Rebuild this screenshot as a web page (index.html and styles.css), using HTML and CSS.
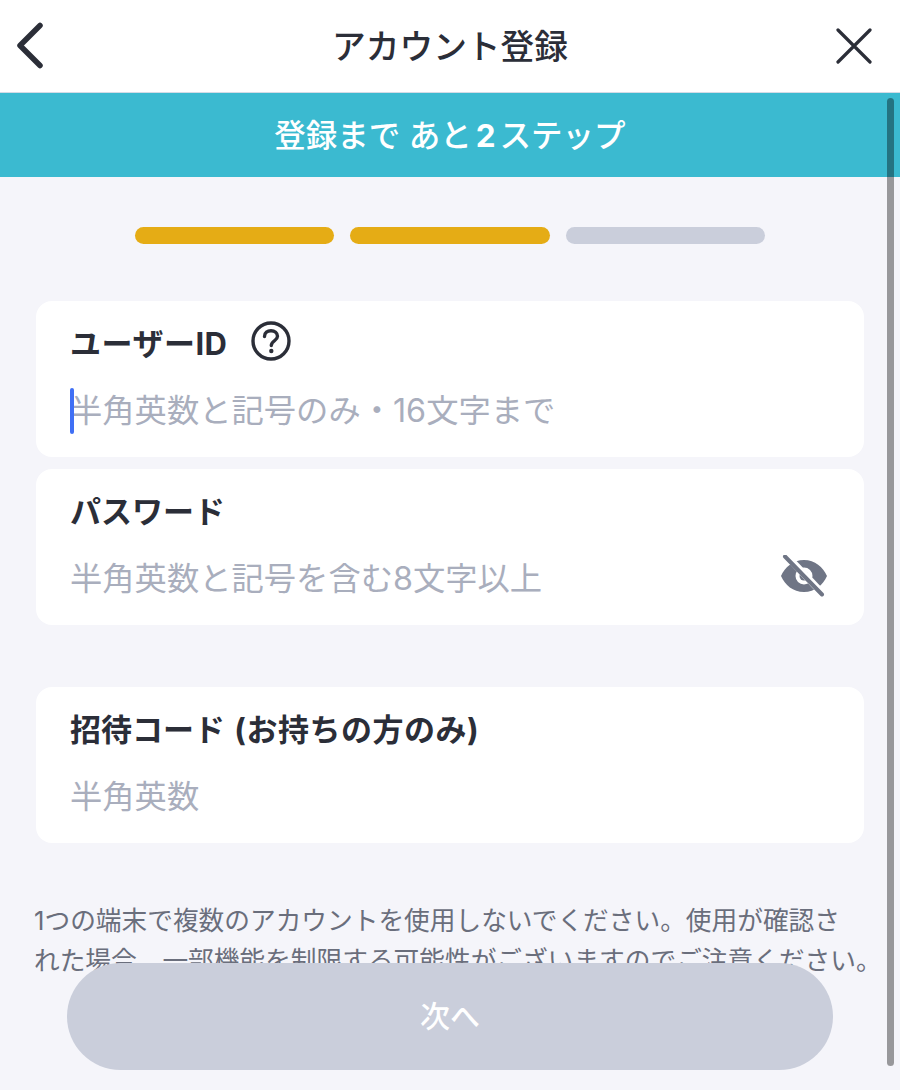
FILE: index.html
```html
<!DOCTYPE html>
<html lang="ja">
<head>
    <meta charset="UTF-8">
    <meta name="viewport" content="width=device-width, initial-scale=1.0">
    <title>アカウント登録</title>
    <link rel="stylesheet" href="styles.css">
</head>
<body>
    <div class="screen">
        <header class="nav">
            <a href="#" class="nav-btn nav-back" aria-label="戻る">
                <svg width="32" height="48" viewBox="0 0 32 48" fill="none" stroke="#2b2e38" stroke-width="5.500" stroke-linecap="round" stroke-linejoin="round"><path d="M25 3.500 L5 23.500 L25 43.500"/></svg>
            </a>
            <h1 class="nav-title">アカウント登録</h1>
            <a href="#" class="nav-btn nav-close" aria-label="閉じる">
                <svg width="36" height="36" viewBox="0 0 36 36" fill="none" stroke="#2b2e38" stroke-width="3.200" stroke-linecap="round"><path d="M2 2 L34 34 M34 2 L2 34"/></svg>
            </a>
        </header>
        <div class="banner"><span>登録まで あと<span class="banner-num">2</span>ステップ</span></div>

        <div class="steps">
            <span class="step done"></span>
            <span class="step done"></span>
            <span class="step"></span>
        </div>

        <form class="fields">
            <div class="card">
                <div class="card-label">
                    <span class="label-text">ユーザーID</span>
                    <svg width="40" height="40" viewBox="0 0 40 40" fill="none" stroke="#2b2e38" stroke-width="3.400" stroke-linecap="round">
                        <circle cx="20" cy="20" r="18"/>
                        <path d="M13.500 15.500 C13.500 11.500 16.500 9.800 20 9.800 C23.700 9.800 26.500 12 26.500 15.300 C26.500 19.500 20.300 20 20.300 24.500"/>
                        <circle cx="20.300" cy="30" r="2.200" fill="#2b2e38" stroke="none"/>
                    </svg>
                </div>
                <div class="card-input"><span class="caret"></span>半角英数と記号のみ・16文字まで</div>
            </div>
            <div class="card">
                <div class="card-label">パスワード</div>
                <div class="card-input">
                    半角英数と記号を含む8文字以上
                    <svg class="eye" width="48" height="42" viewBox="0 0 48 42">
                        <path fill="#6f7585" fill-rule="evenodd" d="M24 5 C35 5 43 12 47 21 C43 30 35 37 24 37 C13 37 5 30 1 21 C5 12 13 5 24 5 Z M24 12.500 A8.500 8.500 0 1 0 24 29.500 A8.500 8.500 0 1 0 24 12.500 Z"/>
                        <circle cx="24" cy="21" r="4.500" fill="#6f7585"/>
                        <path d="M7 1 L43 39" stroke="#ffffff" stroke-width="7"/>
                        <path d="M5 1.500 L42 39.500" stroke="#6f7585" stroke-width="4" stroke-linecap="round"/>
                    </svg>
                </div>
            </div>
            <div class="card card-invite">
                <div class="card-label"><span>招待コード <span class="paren-text">(お持ちの方のみ)</span></span></div>
                <div class="card-input">半角英数</div>
            </div>
        </form>

        <p class="note">1つの端末で複数のアカウントを使用しないでください。使用が確認さ<br>れた場合、一部機能を制限する可能性がございますのでご注意ください。</p>

        <button class="next-btn" type="button">次へ</button>
        <div class="scroll-thumb"></div>
    </div>
</body>
</html>
```

FILE: styles.css
```css
* {
    box-sizing: border-box;
}
html, body {
    margin: 0;
    padding: 0;
}
body {
    font-family: Inter, "Noto Sans CJK JP", sans-serif;
    background-color: #f5f5fa;
    color: #2b2e38;
}
.screen {
    position: relative;
    width: 900px;
    height: 1090px;
    overflow: hidden;
}
.nav {
    display: flex;
    align-items: center;
    justify-content: space-between;
    height: 93px;
    padding: 0 28px 0 15px;
    background-color: #fff;
    border-bottom: 1px solid #d3dbe6;
}
.nav-btn {
    display: flex;
    align-items: center;
    width: 36px;
}
.nav-back {
    justify-content: flex-start;
}
.nav-close {
    justify-content: flex-end;
}
.nav-title {
    margin: 2px 0 0 13px;
    font-size: 33.700px;
    font-weight: 500;
    line-height: 1;
}
.banner {
    display: flex;
    align-items: center;
    justify-content: center;
    height: 84px;
    padding-bottom: 5px;
    background-color: #3bbad0;
    color: #fff;
    font-size: 31.500px;
    font-weight: 500;
}
.banner-num {
    margin: 0 4px;
    font-weight: 700;
}
.steps {
    display: flex;
    justify-content: center;
    gap: 16.500px;
    margin-top: 50px;
}
.step {
    width: 199.300px;
    height: 17px;
    border-radius: 9px;
    background-color: #cacedb;
}
.step.done {
    background-color: #e5ac15;
}
.fields {
    display: flex;
    flex-direction: column;
    gap: 12px;
    margin: 57px 36px 0;
}
.card {
    height: 156px;
    padding: 19px 34px 0;
    border-radius: 16px;
    background-color: #fff;
}
.card-invite {
    margin-top: 50px;
}
.card-label {
    display: flex;
    align-items: center;
    gap: 24px;
    height: 42px;
    font-size: 31px;
    font-weight: 700;
}
.label-text {
    letter-spacing: 0.500px;
}
.paren-text {
    margin-left: 2px;
    letter-spacing: 0.500px;
}
.card-input {
    display: flex;
    align-items: center;
    justify-content: space-between;
    position: relative;
    height: 48px;
    margin-top: 22px;
    font-size: 32.300px;
    color: #a9aebd;
}
.caret {
    position: absolute;
    left: 0;
    top: 4px;
    width: 4px;
    height: 46px;
    border-radius: 2px;
    background-color: #3f6ff5;
}
.eye {
    margin-right: 2px;
}
.note {
    margin: 58px 10px 0 34px;
    font-size: 25.700px;
    line-height: 40px;
    color: #6a6e7c;
}
.next-btn {
    position: absolute;
    left: 67px;
    top: 963px;
    width: 766px;
    height: 107px;
    padding: 0 0 6px;
    border: none;
    border-radius: 54px;
    background-color: #cacedb;
    color: #fff;
    font-family: inherit;
    font-size: 30px;
    font-weight: 500;
}
.scroll-thumb {
    position: absolute;
    left: 887px;
    top: 98px;
    width: 7px;
    height: 968px;
    border-radius: 4px;
    background-color: rgba(0, 0, 0, 0.38);
}
```
